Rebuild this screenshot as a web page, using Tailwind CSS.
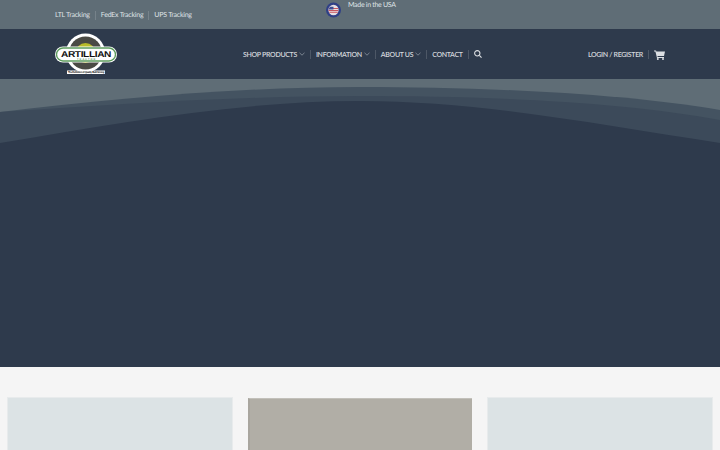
<!DOCTYPE html>
<html lang="en">
<head>
  <meta charset="UTF-8" />
  <title>Artillian</title>
  <script src="https://cdn.jsdelivr.net/npm/@tailwindcss/browser@4"></script>
</head>
<body class="font-['Lato','Open_Sans',sans-serif] [text-rendering:geometricPrecision] bg-[#f5f5f5] h-[450px] overflow-hidden">

  <!-- Top bar -->
  <div class="h-[29px] bg-[#5f6d76] flex pl-[55px] text-[#dfe3e6] text-[7px] tracking-[-0.23px] whitespace-nowrap">
    <div class="w-[271px] flex items-center pt-[1px]">
      <a>LTL Tracking</a>
      <span class="w-px h-[9px] bg-white/15 mx-[5px]"></span>
      <a>FedEx Tracking</a>
      <span class="w-px h-[9px] bg-white/15 mx-[5px]"></span>
      <a>UPS Tracking</a>
    </div>
    <div class="flex items-start gap-[7px] pt-[2px]">
      <svg class="w-[15px] h-[16px]" viewBox="0 0 16 16">
        <circle cx="8" cy="8" r="8" fill="#2f3f86"/>
        <circle cx="8" cy="8" r="5.500" fill="#e8dfe2"/>
        <path d="M3 6.500h10M2.800 8.500h10.400M3.500 10.500h9" stroke="#c9555f" stroke-width="1.100"/>
        <path d="M4 4.500h4v3H3z" fill="#3d4e93"/>
      </svg>
      <span class="leading-[7px] tracking-[-0.3px]">Made in the USA</span>
    </div>
  </div>

  <!-- Main header -->
  <header class="h-[50px] bg-[#2e3a4c] flex items-center pl-[55px] text-[#d5d8dc] text-[7px] tracking-[-0.32px] font-semibold whitespace-nowrap">
    <svg class="w-[62px] h-[42px] mr-[126px] shrink-0" viewBox="0 0 62 42">
      <circle cx="30.500" cy="20" r="19.500" fill="#fff"/>
      <circle cx="30.500" cy="20" r="16.500" fill="#4a4a44"/>
      <circle cx="30.500" cy="20" r="10" fill="#b9bb2a"/>
      <rect x="0" y="13.500" width="62" height="16" rx="8" fill="#fff"/>
      <rect x="1.500" y="15" width="59" height="13" rx="6.500" fill="none" stroke="#5d9c5d" stroke-width="1.400"/>
      <text x="31" y="24" text-anchor="middle" font-family="Liberation Sans" font-weight="700" font-size="8.500" fill="#111" textLength="50" lengthAdjust="spacingAndGlyphs">ARTILLIAN</text>
      <text x="31" y="27.300" text-anchor="middle" font-family="Liberation Sans" font-weight="700" font-size="2.500" fill="#4d8a4d" textLength="18">TRACTOR</text>
      <rect x="12" y="37.500" width="38" height="3.500" fill="#fff"/>
      <text x="31" y="40.200" text-anchor="middle" font-family="Liberation Sans" font-size="2.800" fill="#222" textLength="36" lengthAdjust="spacingAndGlyphs">The Definition of Quality Built Strong</text>
    </svg>

    <nav class="flex items-center">
      <a class="pt-[2px]">SHOP PRODUCTS</a>
      <svg class="w-[6px] h-[4px] ml-[2px]" viewBox="0 0 6 4"><path d="M.5.8 3 3.200 5.500.8" fill="none" stroke="#8d96a1" stroke-width=".8"/></svg>
      <span class="w-px h-[9px] bg-white/15 mx-[5px]"></span>
      <a class="pt-[2px]">INFORMATION</a>
      <svg class="w-[6px] h-[4px] ml-[2px]" viewBox="0 0 6 4"><path d="M.5.8 3 3.200 5.500.8" fill="none" stroke="#8d96a1" stroke-width=".8"/></svg>
      <span class="w-px h-[9px] bg-white/15 mx-[5px]"></span>
      <a class="pt-[2px]">ABOUT US</a>
      <svg class="w-[6px] h-[4px] ml-[2px]" viewBox="0 0 6 4"><path d="M.5.8 3 3.200 5.500.8" fill="none" stroke="#8d96a1" stroke-width=".8"/></svg>
      <span class="w-px h-[9px] bg-white/15 mx-[5px]"></span>
      <a class="pt-[2px]">CONTACT</a>
      <span class="w-px h-[9px] bg-white/15 mx-[5px]"></span>
      <svg class="w-[8px] h-[8px]" viewBox="0 0 9 9"><circle cx="3.700" cy="3.700" r="3" fill="none" stroke="#dcdfe3" stroke-width="1.200"/><path d="M6 6l2.500 2.500" stroke="#dcdfe3" stroke-width="1.300"/></svg>
    </nav>

    <div class="flex items-center ml-auto pr-[55px]">
      <a class="pt-[2px]">LOGIN / REGISTER</a>
      <span class="w-px h-[9px] bg-white/15 mx-[5px]"></span>
      <svg class="w-[11px] h-[10px] mt-[1px]" viewBox="0 0 11 10"><path d="M0 .5h2l.4 1H11l-1 4.500H3.400l.3 1H10v1H3L1.400 1.500H0z" fill="#dcdfe3"/><circle cx="3.800" cy="9" r="1" fill="#dcdfe3"/><circle cx="9" cy="9" r="1" fill="#dcdfe3"/></svg>
    </div>
  </header>

  <!-- Hero with wave shapes -->
  <section class="h-[288px] bg-[#2e3a4c]">
    <svg class="w-[720px] h-[70px] block" viewBox="0 0 720 70" preserveAspectRatio="none">
      <rect width="720" height="70" fill="#5f6d76"/>
      <path d="M0 33C120 19 240 8 360 8C480 8 620 14 720 31V70H0z" fill="#445361"/>
      <path d="M0 33C120 25 240 17 360 17C480 17 620 22 720 41V70H0z" fill="#3c4a5a"/>
      <path d="M0 64C120 44 240 22 360 22C480 22 600 46 720 64V70H0z" fill="#2e3a4c"/>
    </svg>
  </section>

  <!-- Cards -->
  <div class="px-[7px] pt-[30px] grid grid-cols-3 gap-[14px]">
    <div class="h-[60px] bg-[#dce3e5] border border-[#e8ebec]"></div>
    <div class="h-[60px] mt-[1px] mx-[1px] bg-[#b1aea6] border-t border-t-[#c2c0ba] border-l-2 border-l-[#a9a69f]"></div>
    <div class="h-[60px] bg-[#dce3e5] border border-[#e8ebec]"></div>
  </div>

</body>
</html>
